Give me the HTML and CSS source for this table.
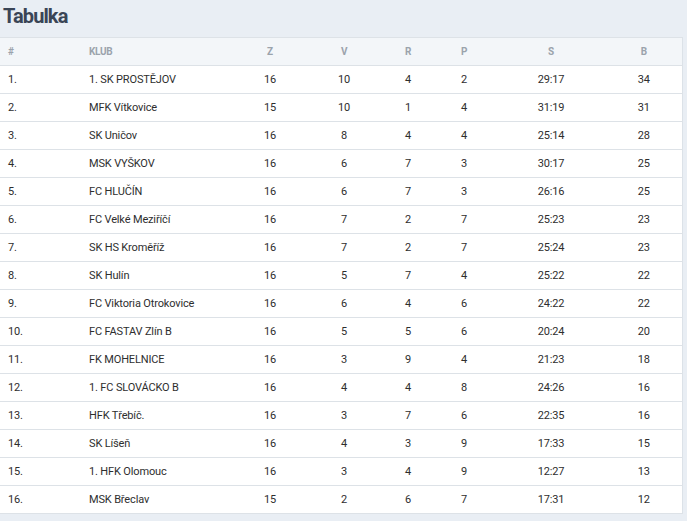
FILE: index.html
```html
<!DOCTYPE html>
<html lang="cs">
<head>
<meta charset="utf-8">
<title>Tabulka</title>
<link rel="stylesheet" href="styles.css">
</head>
<body>
<h2 class="title">Tabulka</h2>
<table class="standings">
  <colgroup>
    <col class="c-pos"><col class="c-club"><col class="c-z"><col class="c-v"><col class="c-r"><col class="c-p"><col class="c-s"><col class="c-b">
  </colgroup>
  <thead>
    <tr><th class="left">#</th><th class="left">KLUB</th><th>Z</th><th>V</th><th>R</th><th>P</th><th>S</th><th>B</th></tr>
  </thead>
  <tbody>
    <tr><td class="left">1.</td><td class="left">1. SK PROSTĚJOV</td><td>16</td><td>10</td><td>4</td><td>2</td><td>29:17</td><td>34</td></tr>
    <tr><td class="left">2.</td><td class="left">MFK Vítkovice</td><td>15</td><td>10</td><td>1</td><td>4</td><td>31:19</td><td>31</td></tr>
    <tr><td class="left">3.</td><td class="left">SK Uničov</td><td>16</td><td>8</td><td>4</td><td>4</td><td>25:14</td><td>28</td></tr>
    <tr><td class="left">4.</td><td class="left">MSK VYŠKOV</td><td>16</td><td>6</td><td>7</td><td>3</td><td>30:17</td><td>25</td></tr>
    <tr><td class="left">5.</td><td class="left">FC HLUČÍN</td><td>16</td><td>6</td><td>7</td><td>3</td><td>26:16</td><td>25</td></tr>
    <tr><td class="left">6.</td><td class="left">FC Velké Meziříčí</td><td>16</td><td>7</td><td>2</td><td>7</td><td>25:23</td><td>23</td></tr>
    <tr><td class="left">7.</td><td class="left">SK HS Kroměříž</td><td>16</td><td>7</td><td>2</td><td>7</td><td>25:24</td><td>23</td></tr>
    <tr><td class="left">8.</td><td class="left">SK Hulín</td><td>16</td><td>5</td><td>7</td><td>4</td><td>25:22</td><td>22</td></tr>
    <tr><td class="left">9.</td><td class="left">FC Viktoria Otrokovice</td><td>16</td><td>6</td><td>4</td><td>6</td><td>24:22</td><td>22</td></tr>
    <tr><td class="left">10.</td><td class="left">FC FASTAV Zlín B</td><td>16</td><td>5</td><td>5</td><td>6</td><td>20:24</td><td>20</td></tr>
    <tr><td class="left">11.</td><td class="left">FK MOHELNICE</td><td>16</td><td>3</td><td>9</td><td>4</td><td>21:23</td><td>18</td></tr>
    <tr><td class="left">12.</td><td class="left">1. FC SLOVÁCKO B</td><td>16</td><td>4</td><td>4</td><td>8</td><td>24:26</td><td>16</td></tr>
    <tr><td class="left">13.</td><td class="left">HFK Třebíč.</td><td>16</td><td>3</td><td>7</td><td>6</td><td>22:35</td><td>16</td></tr>
    <tr><td class="left">14.</td><td class="left">SK Líšeň</td><td>16</td><td>4</td><td>3</td><td>9</td><td>17:33</td><td>15</td></tr>
    <tr><td class="left">15.</td><td class="left">1. HFK Olomouc</td><td>16</td><td>3</td><td>4</td><td>9</td><td>12:27</td><td>13</td></tr>
    <tr><td class="left">16.</td><td class="left">MSK Břeclav</td><td>15</td><td>2</td><td>6</td><td>7</td><td>17:31</td><td>12</td></tr>
  </tbody>
</table>
</body>
</html>
```
FILE: styles.css
```css
html, body {
  margin: 0;
  padding: 0;
  background: #e9eef4;
}
body {
  font-family: Roboto, "Liberation Sans", sans-serif;
  color: #2e2e2e;
}
.title {
  margin: 0;
  height: 37px;
  padding: 4px 0 0 3px;
  box-sizing: border-box;
  font-size: 20px;
  line-height: 24px;
  font-weight: 700;
  letter-spacing: -0.9px;
  color: #3a4556;
}
.standings {
  width: 682px;
  border-collapse: collapse;
  table-layout: fixed;
  background: #fff;
  border-right: 1px solid #dce2e8;
}
.c-pos { width: 81px; }
.c-club { width: 155px; }
.c-z { width: 68px; }
.c-v { width: 80px; }
.c-r { width: 48px; }
.c-p { width: 64px; }
.c-s { width: 110px; }
.c-b { width: 76px; }
.standings th,
.standings td {
  height: 27px;
  padding: 0;
  text-align: center;
  border-top: 1px solid #dde2e7;
  white-space: nowrap;
}
.standings thead th {
  background: #f3f6f9;
  color: #9ba3ac;
  font-size: 10px;
  font-weight: 700;
  letter-spacing: -0.3px;
}
.standings tbody td {
  font-size: 11px;
  letter-spacing: -0.15px;
  color: #2e2e2e;
}
.standings tbody tr:last-child td {
  border-bottom: 1px solid #dde2e7;
}
.standings .left {
  text-align: left;
  padding-left: 8px;
}
```
